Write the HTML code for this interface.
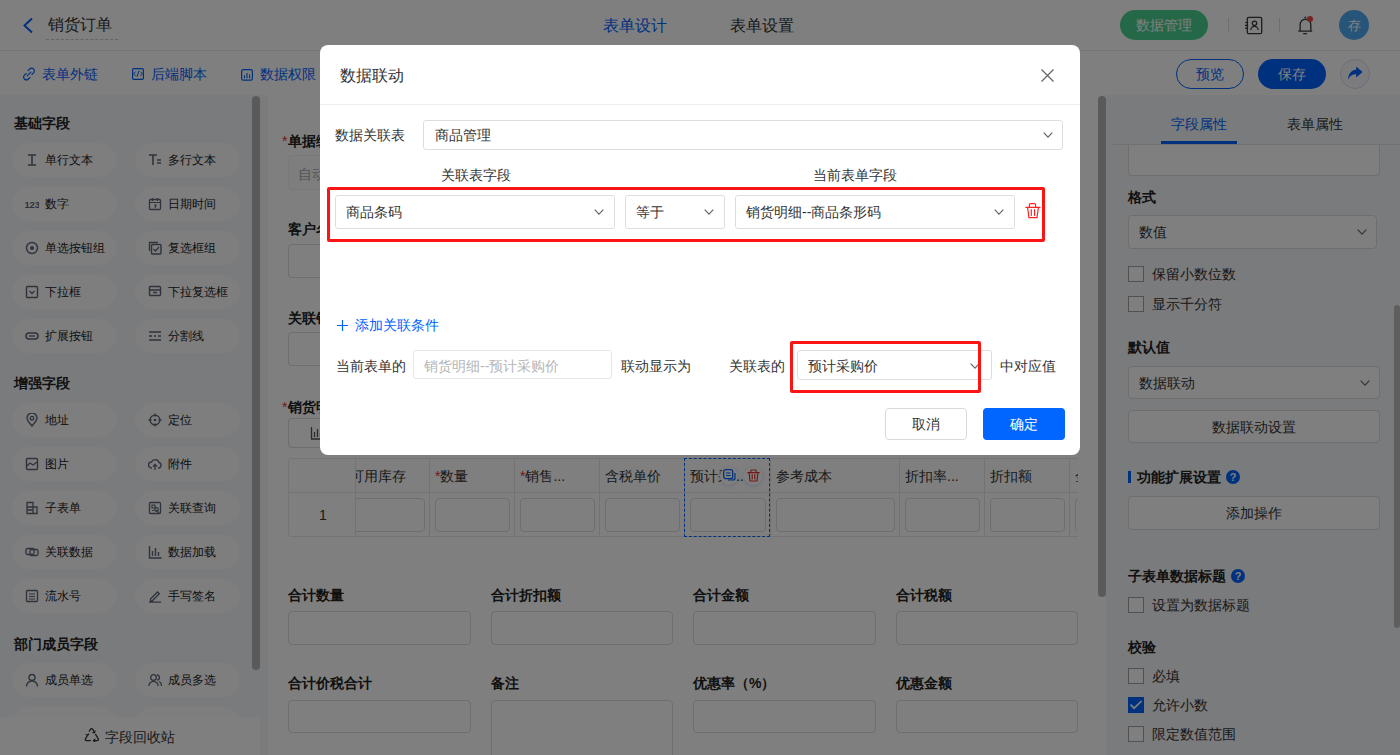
<!DOCTYPE html>
<html><head><meta charset="utf-8"><style>
*{box-sizing:border-box;margin:0;padding:0}
html,body{width:1400px;height:755px;overflow:hidden;background:#fff}
body{font-family:"Liberation Sans",sans-serif;color:#333;position:relative;font-size:14px}
.a{position:absolute;white-space:nowrap}
.t14{font-size:14px;line-height:14px}
.t12{font-size:12px;line-height:12px}
.t16{font-size:16px;line-height:16px}
svg{display:block}
#hdr{position:absolute;left:0;top:0;width:1400px;height:51px;background:#fff;border-bottom:1px solid #e8e8e8}
#bar2{position:absolute;left:0;top:51px;width:1400px;height:44px;background:#fff}
.blue{color:#0062ff}
#lp{position:absolute;left:0;top:95px;width:268px;height:660px;background:#f5f6f9}
.pill{position:absolute;width:105px;height:34px;border-radius:17px;background:#fcfcfd}
.pill .ic{position:absolute;left:12.5px;top:10px;width:14px;height:14px}
.pill span{position:absolute;left:33px;top:11px;font-size:12px;line-height:12px;color:#222}
.sech{position:absolute;left:14px;font-size:14px;line-height:14px;font-weight:bold;color:#222}
.sb{position:absolute;width:8px;border-radius:4px;background:#b5b5b5}
#cv{position:absolute;left:268px;top:95px;width:838px;height:660px;background:#fff}
.lab{position:absolute;font-size:14px;line-height:14px;font-weight:bold;color:#222;white-space:nowrap}
.inp{position:absolute;border:1px solid #dcdcdc;border-radius:4px;background:#fff}
#rp{position:absolute;left:1106px;top:95px;width:294px;height:660px;background:#f5f6f9}
.cb{position:absolute;width:16px;height:16px;border:1px solid #a3a3a3;background:#fff;border-radius:0}
.rt{position:absolute;font-size:14px;line-height:14px;color:#333;white-space:nowrap}
#ov{position:absolute;left:0;top:0;width:1400px;height:755px;background:rgba(0,0,0,.5)}
#md{position:absolute;left:320px;top:45px;width:760px;height:410px;background:#fff;border-radius:8px;overflow:hidden}
.sel{position:absolute;border:1px solid #dedede;border-radius:3px;background:#fff}
.red{position:absolute;border:3px solid #fb1414;border-radius:2px}
</style></head><body>

<div id="hdr">
  <svg class="a" style="left:22px;top:17px" width="12" height="17" viewBox="0 0 12 17"><path d="M10 1.5 L2.5 8.5 L10 15.5" fill="none" stroke="#0062ff" stroke-width="2"/></svg>
  <div class="a t16" style="left:48px;top:17px;color:#333">销货订单</div>
  <div class="a" style="left:46px;top:39px;width:72px;border-top:1px dashed #c8c8c8"></div>
  <div class="a t16 blue" style="left:603px;top:18px">表单设计</div>
  <div class="a t16" style="left:730px;top:18px;color:#333">表单设置</div>
  <div class="a" style="left:1120px;top:10px;width:88px;height:30px;border-radius:15px;background:#4ad090"></div>
  <div class="a t14" style="left:1136px;top:18px;color:#fff">数据管理</div>
  <div class="a" style="left:1228px;top:18px;width:1px;height:14px;background:#ddd"></div>
  <div class="a" style="left:1279px;top:18px;width:1px;height:14px;background:#ddd"></div>

  <svg class="a" style="left:1244px;top:16px" width="19" height="19" viewBox="0 0 19 19"><rect x="3.3" y="1.3" width="14.4" height="16.4" rx="1.5" stroke="#3a3a3a" stroke-width="1.3" fill="none"/><path d="M1 6.5h3.2M1 9.3h3.2M1 12.1h3.2" stroke="#3a3a3a" stroke-width="1.2"/><circle cx="10.5" cy="7.2" r="2.2" stroke="#3a3a3a" stroke-width="1.25" fill="none"/><path d="M6.8 14a3.7 3.7 0 0 1 7.4 0" stroke="#3a3a3a" stroke-width="1.25" fill="none"/></svg>
  <svg class="a" style="left:1297px;top:15px" width="17" height="20" viewBox="0 0 17 20"><path d="M1.3 16.1H15.2M3.1 15.6V9.6A5.35 5.35 0 0 1 13.8 9.6V15.6M7.4 2.3H9.3M6.2 18.6H10" stroke="#3a3a3a" stroke-width="1.3" fill="none"/></svg>
  <div class="a" style="left:1307px;top:16px;width:6px;height:6px;border-radius:50%;background:#f04646"></div>
  <div class="a" style="left:1339px;top:10px;width:30px;height:30px;border-radius:50%;background:#4eaaf5"></div>
  <div class="a" style="left:1348px;top:19px;font-size:13px;line-height:13px;color:#fff">存</div>
</div>
<div id="bar2">

  <svg class="a" style="left:22px;top:16px" width="14" height="14" viewBox="0 0 14 14"><path d="M6 3.6L7.6 2a2.7 2.7 0 0 1 3.9 3.9L9.9 7.5M8 10.4L6.4 12a2.7 2.7 0 0 1-3.9-3.9L4.1 6.5M5.2 8.8L8.8 5.2" stroke="#0062ff" stroke-width="1.15" fill="none" stroke-linecap="round"/></svg>
  <svg class="a" style="left:131px;top:16px" width="14" height="14" viewBox="0 0 14 14"><rect x="1.6" y="1.6" width="10.8" height="10.8" rx="1.2" stroke="#0062ff" stroke-width="1.2" fill="none"/><path d="M4.6 4.6L2.6 6.8l2 2M9.4 4.6l2 2.2-2 2M8 3.6L6 9.8" stroke="#0062ff" stroke-width="1" fill="none"/></svg>
  <svg class="a" style="left:240px;top:17px" width="14" height="13" viewBox="0 0 14 13"><rect x="1.6" y="1.6" width="10.8" height="10.6" rx="1.8" stroke="#0062ff" stroke-width="1.2" fill="none"/><path d="M4.5 7.2v3M7 5v5.2M9.6 6.6v3.6" stroke="#0062ff" stroke-width="1.1"/></svg>
  <div class="a t14 blue" style="left:42px;top:16px">表单外链</div>
  <div class="a t14 blue" style="left:151px;top:16px">后端脚本</div>
  <div class="a t14 blue" style="left:260px;top:16px">数据权限</div>
  <div class="a" style="left:1176px;top:8px;width:68px;height:30px;border-radius:15px;border:1px solid #0062ff"></div>
  <div class="a t14 blue" style="left:1196px;top:16px">预览</div>
  <div class="a" style="left:1258px;top:8px;width:68px;height:30px;border-radius:15px;background:#0062ff"></div>
  <div class="a t14" style="left:1278px;top:16px;color:#fff">保存</div>
  <div class="a" style="left:1340px;top:8px;width:30px;height:30px;border-radius:50%;border:1px solid #d5ddef;background:#f8f9fc"></div>
  <svg class="a" style="left:1347px;top:15px" width="17" height="15" viewBox="0 0 17 15"><path d="M9.2 0.5L15.6 6L9.2 11.5V8.3C5.5 8.3 3.2 9.6 1 13.6C1.4 8 4.2 4.4 9.2 3.6z" fill="#0062ff"/></svg>
</div>

<div id="lp">
<div class="sech" style="top:21px">基础字段</div>
<div class="pill" style="left:12px;top:48px"><svg class="ic" viewBox="0 0 14 14"><path d="M3 2h8M3 12h8M7 2v10" stroke="#5d6678" stroke-width="1.6" fill="none"/></svg><span>单行文本</span></div>
<div class="pill" style="left:135px;top:48px"><svg class="ic" viewBox="0 0 14 14"><path d="M1 2h8M5 2v10M9 7h4M9 10h4" stroke="#5d6678" stroke-width="1.6" fill="none"/></svg><span>多行文本</span></div>
<div class="pill" style="left:12px;top:92px"><svg class="ic" viewBox="0 0 14 14"><text x="-0.5" y="10.5" font-size="9.5" font-weight="700" letter-spacing="-0.2" fill="#5d6678" font-family="Liberation Sans">123</text></svg><span>数字</span></div>
<div class="pill" style="left:135px;top:92px"><svg class="ic" viewBox="0 0 14 14"><rect x="1.5" y="2.5" width="11" height="10" rx="1" stroke="#5d6678" stroke-width="1.3" fill="none"/><path d="M1.5 5.5h11M4.5 1v3M9.5 1v3M6 8h2l-1 3" stroke="#5d6678" stroke-width="1.2" fill="none"/></svg><span>日期时间</span></div>
<div class="pill" style="left:12px;top:136px"><svg class="ic" viewBox="0 0 14 14"><circle cx="7" cy="7" r="5.5" stroke="#5d6678" stroke-width="1.4" fill="none"/><circle cx="7" cy="7" r="2" fill="#5d6678"/></svg><span>单选按钮组</span></div>
<div class="pill" style="left:135px;top:136px"><svg class="ic" viewBox="0 0 14 14"><path d="M1.5 10V1.5H10" stroke="#5d6678" stroke-width="1.3" fill="none"/><rect x="3.5" y="3.5" width="9.5" height="9.5" rx="1" stroke="#5d6678" stroke-width="1.4" fill="none"/><path d="M5.5 8l2 2 3.5-4" stroke="#5d6678" stroke-width="1.3" fill="none"/></svg><span>复选框组</span></div>
<div class="pill" style="left:12px;top:180px"><svg class="ic" viewBox="0 0 14 14"><rect x="1.5" y="1.5" width="11" height="11" rx="1" stroke="#5d6678" stroke-width="1.4" fill="none"/><path d="M4.5 6l2.5 2.5L9.5 6" stroke="#5d6678" stroke-width="1.3" fill="none"/></svg><span>下拉框</span></div>
<div class="pill" style="left:135px;top:180px"><svg class="ic" viewBox="0 0 14 14"><rect x="1.5" y="1.5" width="11" height="9" rx="1" stroke="#5d6678" stroke-width="1.4" fill="none"/><path d="M1.5 5h11M5 7.5h4" stroke="#5d6678" stroke-width="1.3" fill="none"/></svg><span>下拉复选框</span></div>
<div class="pill" style="left:12px;top:224px"><svg class="ic" viewBox="0 0 14 14"><rect x="1" y="4" width="12" height="6" rx="3" stroke="#5d6678" stroke-width="1.5" fill="none"/><path d="M4 7h6" stroke="#5d6678" stroke-width="1.3"/></svg><span>扩展按钮</span></div>
<div class="pill" style="left:135px;top:224px"><svg class="ic" viewBox="0 0 14 14"><path d="M1 3h12M1 7h3M6 7h2M10 7h3M1 11h12" stroke="#5d6678" stroke-width="1.3" fill="none"/></svg><span>分割线</span></div>
<div class="sech" style="top:281px">增强字段</div>
<div class="pill" style="left:12px;top:308px"><svg class="ic" viewBox="0 0 14 14"><path d="M7 13C3.5 9 2 7 2 5a5 5 0 0 1 10 0c0 2-1.5 4-5 8z" stroke="#5d6678" stroke-width="1.4" fill="none"/><circle cx="7" cy="5.2" r="1.8" stroke="#5d6678" stroke-width="1.3" fill="none"/></svg><span>地址</span></div>
<div class="pill" style="left:135px;top:308px"><svg class="ic" viewBox="0 0 14 14"><circle cx="7" cy="7" r="4.8" stroke="#5d6678" stroke-width="1.4" fill="none"/><circle cx="7" cy="7" r="1.3" fill="#5d6678"/><path d="M7 0.5v3M7 10.5v3M0.5 7h3M10.5 7h3" stroke="#5d6678" stroke-width="1.4"/></svg><span>定位</span></div>
<div class="pill" style="left:12px;top:352px"><svg class="ic" viewBox="0 0 14 14"><rect x="1.5" y="1.5" width="11" height="11" rx="1.2" stroke="#5d6678" stroke-width="1.4" fill="none"/><path d="M2 9l3-3 3 2 4-3" stroke="#5d6678" stroke-width="1.3" fill="none"/></svg><span>图片</span></div>
<div class="pill" style="left:135px;top:352px"><svg class="ic" viewBox="0 0 14 14"><path d="M4 11H3.5a3 3 0 0 1 0-6 4 4 0 0 1 7.5 0.5A2.8 2.8 0 0 1 10.5 11H10" stroke="#5d6678" stroke-width="1.4" fill="none"/><path d="M7 13V7.5M5 9.5l2-2 2 2" stroke="#5d6678" stroke-width="1.3" fill="none"/></svg><span>附件</span></div>
<div class="pill" style="left:12px;top:396px"><svg class="ic" viewBox="0 0 14 14"><path d="M2 1.5h6v11H2zM8 6h4v6.5H8M2 6h6M2 9h6" stroke="#5d6678" stroke-width="1.3" fill="none"/></svg><span>子表单</span></div>
<div class="pill" style="left:135px;top:396px"><svg class="ic" viewBox="0 0 14 14"><rect x="1.5" y="1.5" width="11" height="11" rx="1" stroke="#5d6678" stroke-width="1.3" fill="none"/><path d="M4 4h3v3H4zM8 9l3 3M4 9.5h2" stroke="#5d6678" stroke-width="1.2" fill="none"/><circle cx="8.5" cy="8.5" r="1.8" stroke="#5d6678" stroke-width="1.2" fill="none"/></svg><span>关联查询</span></div>
<div class="pill" style="left:12px;top:440px"><svg class="ic" viewBox="0 0 14 14"><rect x="1" y="3.5" width="8" height="6" rx="1.5" stroke="#5d6678" stroke-width="1.3" fill="none"/><rect x="5" y="4.5" width="8" height="6" rx="1.5" stroke="#5d6678" stroke-width="1.3" fill="none"/></svg><span>关联数据</span></div>
<div class="pill" style="left:135px;top:440px"><svg class="ic" viewBox="0 0 14 14"><path d="M1.5 1v12h12M4.5 6v5M7.5 3v8M10.5 7v4" stroke="#5d6678" stroke-width="1.4" fill="none"/></svg><span>数据加载</span></div>
<div class="pill" style="left:12px;top:484px"><svg class="ic" viewBox="0 0 14 14"><rect x="1.5" y="1.5" width="11" height="11" rx="1" stroke="#5d6678" stroke-width="1.3" fill="none"/><path d="M4 5h6M4 7.5h3M7 7.5h3M4 10h6" stroke="#5d6678" stroke-width="1.2" fill="none"/></svg><span>流水号</span></div>
<div class="pill" style="left:135px;top:484px"><svg class="ic" viewBox="0 0 14 14"><path d="M2.5 10l7-7 1.8 1.8-7 7H2.5zM1 13.2h12" stroke="#5d6678" stroke-width="1.3" fill="none"/></svg><span>手写签名</span></div>
<div class="sech" style="top:542px">部门成员字段</div>
<div class="pill" style="left:12px;top:568px"><svg class="ic" viewBox="0 0 14 14"><circle cx="7" cy="4.5" r="3" stroke="#5d6678" stroke-width="1.4" fill="none"/><path d="M1.5 13.5a5.5 5.5 0 0 1 11 0" stroke="#5d6678" stroke-width="1.4" fill="none"/></svg><span>成员单选</span></div>
<div class="pill" style="left:135px;top:568px"><svg class="ic" viewBox="0 0 14 14"><circle cx="5.5" cy="4.5" r="2.8" stroke="#5d6678" stroke-width="1.3" fill="none"/><path d="M0.8 13a4.7 4.7 0 0 1 9.4 0M9 2a2.5 2.5 0 0 1 0 5M11 8.5a4.5 4.5 0 0 1 2.5 4.5" stroke="#5d6678" stroke-width="1.3" fill="none"/></svg><span>成员多选</span></div>
<div class="pill" style="left:12px;top:612px"><svg class="ic" viewBox="0 0 14 14"></svg><span>部门单选</span></div>
<div class="pill" style="left:135px;top:612px"><svg class="ic" viewBox="0 0 14 14"></svg><span>部门多选</span></div>
<div class="sb" style="left:252px;top:1px;height:574px"></div>
<div style="position:absolute;left:0;top:622px;width:260px;height:38px;background:#fff"><svg style="position:absolute;left:84px;top:11px" width="16" height="14" viewBox="0 0 16 14"><path d="M5.3 3.2L6.6 1.2Q7.6 -0.1 8.6 1.2L10.4 4.3M11.6 6.4L14.2 10.9Q14.9 12.6 13 12.6H9.6M6.4 12.6H2.6Q0.7 12.6 1.5 10.9L3.6 7.2" stroke="#333" stroke-width="1.25" fill="none" stroke-linecap="round"/><path d="M8.8 4.6L10.6 4.6L11 2.8M11 11.1L9.4 12.6L11 14M2.2 6.6L3.7 7.3L4.8 5.9" stroke="#333" stroke-width="1.15" fill="none" stroke-linecap="round"/></svg><div class="a t14" style="left:105px;top:12.5px;color:#333">字段回收站</div></div>
</div>
<div id="cv"><div class="lab" style="left:14px;top:39px"><span style="color:#e5322d;font-weight:normal;margin-right:1px">*</span>单据编号</div>
<div class="inp" style="left:20px;top:60px;width:385px;height:35px;border-color:#f3f3f3;background:#fcfcfc"></div>
<div class="a t14" style="left:30px;top:72px;color:#a8a8a8">自动生成</div>
<div class="lab" style="left:20px;top:127px">客户名称</div>
<div class="inp" style="left:20px;top:149px;width:385px;height:34px"></div>
<div class="lab" style="left:20px;top:216px">关联销售机会</div>
<div class="inp" style="left:20px;top:237px;width:385px;height:34px"></div>
<div class="lab" style="left:14px;top:305px"><span style="color:#e5322d;font-weight:normal;margin-right:1px">*</span>销货明细</div>
<div class="inp" style="left:20px;top:323px;width:112px;height:30px"></div>
<svg class="a" style="left:42px;top:331px" width="14" height="14" viewBox="0 0 14 14"><path d="M1.5 1v12h12M4.5 6v5M7.5 3v8M10.5 7v4" stroke="#555" stroke-width="1.3" fill="none"/></svg>
<div style="position:absolute;left:20px;top:363px;width:790px;height:79px;border:1px solid #e8e8e8;border-right:none;border-radius:4px 0 0 4px;overflow:hidden;background:#fff">
<div class="a" style="left:0;top:33px;width:790px;height:1px;background:#e6e6e6"></div>
<div class="a" style="left:140px;top:0;width:1px;height:79px;background:#e6e6e6"></div>
<div class="a t14" style="left:61px;top:10px;color:#333">可用库存</div>
<div class="inp" style="left:61px;top:39px;width:75px;height:34px"></div>
<div class="a" style="left:225px;top:0;width:1px;height:79px;background:#e6e6e6"></div>
<div class="a t14" style="left:146px;top:10px;color:#333"><span style="color:#e5322d">*</span>数量</div>
<div class="inp" style="left:146px;top:39px;width:75px;height:34px"></div>
<div class="a" style="left:310px;top:0;width:1px;height:79px;background:#e6e6e6"></div>
<div class="a t14" style="left:231px;top:10px;color:#333"><span style="color:#e5322d">*</span>销售...</div>
<div class="inp" style="left:231px;top:39px;width:75px;height:34px"></div>
<div class="a" style="left:395px;top:0;width:1px;height:79px;background:#e6e6e6"></div>
<div class="a t14" style="left:316px;top:10px;color:#333">含税单价</div>
<div class="inp" style="left:316px;top:39px;width:75px;height:34px"></div>
<div class="a" style="left:481px;top:0;width:1px;height:79px;background:#e6e6e6"></div>
<div class="a t14" style="left:401px;top:10px;color:#333">预计采...</div>
<div class="inp" style="left:401px;top:39px;width:76px;height:34px"></div>
<div class="a" style="left:610px;top:0;width:1px;height:79px;background:#e6e6e6"></div>
<div class="a t14" style="left:487px;top:10px;color:#333">参考成本</div>
<div class="inp" style="left:487px;top:39px;width:119px;height:34px"></div>
<div class="a" style="left:695px;top:0;width:1px;height:79px;background:#e6e6e6"></div>
<div class="a t14" style="left:616px;top:10px;color:#333">折扣率...</div>
<div class="inp" style="left:616px;top:39px;width:75px;height:34px"></div>
<div class="a" style="left:780px;top:0;width:1px;height:79px;background:#e6e6e6"></div>
<div class="a t14" style="left:701px;top:10px;color:#333">折扣额</div>
<div class="inp" style="left:701px;top:39px;width:75px;height:34px"></div>
<div class="a" style="left:865px;top:0;width:1px;height:79px;background:#e6e6e6"></div>
<div class="a t14" style="left:786px;top:10px;color:#333">金额</div>
<div class="inp" style="left:786px;top:39px;width:75px;height:34px"></div>
<div class="a" style="left:0;top:0;width:67px;height:79px;background:#fff;border-right:1px solid #e6e6e6"></div>
<div class="a" style="left:0;top:33px;width:67px;height:1px;background:#e6e6e6"></div>
<div class="a t14" style="left:30px;top:49px;color:#333">1</div>
</div>
<div class="a" style="left:416px;top:363px;width:86px;height:79px;border:1px dashed #0062ff"></div>
<div class="a" style="left:452px;top:372px;width:18px;height:18px;border-radius:50%;background:#fff;box-shadow:0 1px 4px rgba(0,50,160,.18)"></div>
<div class="a" style="left:476px;top:372px;width:18px;height:18px;border-radius:50%;background:#fff;box-shadow:0 1px 4px rgba(0,50,160,.18)"></div>
<svg class="a" style="left:455px;top:374px" width="13" height="12" viewBox="0 0 13 12"><rect x="0.7" y="0.7" width="9" height="9" rx="2" stroke="#0062ff" stroke-width="1.3" fill="none"/><path d="M3 4h4.5M3 6.5h4.5M12 4v5a2 2 0 0 1-2 2H5" stroke="#0062ff" stroke-width="1.2" fill="none"/></svg>
<svg class="a" style="left:479px;top:374px" width="13" height="13" viewBox="0 0 13 13"><path d="M3.8 3.4V1.8Q3.8 1 4.6 1H8.4Q9.2 1 9.2 1.8V3.4M0.8 3.6H12.2M2.1 3.6L3 12H10L10.9 3.6M5.2 5.6V10M7.8 5.6V10" stroke="#e5322d" stroke-width="1.2" fill="none" stroke-linecap="round"/></svg>
<div class="lab" style="left:20px;top:493px">合计数量</div>
<div class="inp" style="left:20px;top:516px;width:183px;height:34px"></div>
<div class="lab" style="left:223px;top:493px">合计折扣额</div>
<div class="inp" style="left:223px;top:516px;width:182px;height:34px"></div>
<div class="lab" style="left:425px;top:493px">合计金额</div>
<div class="inp" style="left:425px;top:516px;width:183px;height:34px"></div>
<div class="lab" style="left:628px;top:493px">合计税额</div>
<div class="inp" style="left:628px;top:516px;width:182px;height:34px"></div>
<div class="lab" style="left:20px;top:581px">合计价税合计</div>
<div class="inp" style="left:20px;top:605px;width:183px;height:33px"></div>
<div class="lab" style="left:223px;top:581px">备注</div>
<div class="inp" style="left:223px;top:605px;width:182px;height:80px"></div>
<div class="lab" style="left:425px;top:581px">优惠率（%）</div>
<div class="inp" style="left:425px;top:605px;width:183px;height:33px"></div>
<div class="lab" style="left:628px;top:581px">优惠金额</div>
<div class="inp" style="left:628px;top:605px;width:182px;height:33px"></div>
<div class="sb" style="left:830px;top:1px;height:501px"></div></div>
<div id="rp"><div class="inp" style="left:22px;top:25px;width:252px;height:56px;"></div>
<div class="a" style="left:0;top:0;width:294px;height:49px;background:#f5f6f9"></div>
<div class="a" style="left:7px;top:49px;width:287px;height:1px;background:#e3e3e3"></div>
<div class="rt" style="left:65px;top:22px;color:#0062ff">字段属性</div>
<div class="rt" style="left:181px;top:22px;">表单属性</div>
<div class="a" style="left:55px;top:46px;width:76px;height:3px;background:#0062ff"></div>
<div class="rt" style="left:22px;top:95px;font-weight:bold;color:#222">格式</div>
<div class="inp" style="left:22px;top:120px;width:249px;height:34px;"></div>
<div class="rt" style="left:33px;top:130px;">数值</div>
<svg class="a" style="left:251px;top:134px" width="10" height="6" viewBox="0 0 10 6"><path d="M0.7 0.7L5.0 5.1L9.3 0.7" stroke="#666" stroke-width="1.2" fill="none"/></svg>
<div class="cb" style="left:22px;top:171px"></div>
<div class="rt" style="left:46px;top:172px;">保留小数位数</div>
<div class="cb" style="left:22px;top:201px"></div>
<div class="rt" style="left:46px;top:202px;">显示千分符</div>
<div class="rt" style="left:22px;top:245px;font-weight:bold;color:#222">默认值</div>
<div class="inp" style="left:22px;top:271px;width:252px;height:33px;"></div>
<div class="rt" style="left:33px;top:281px;">数据联动</div>
<svg class="a" style="left:254px;top:285px" width="10" height="6" viewBox="0 0 10 6"><path d="M0.7 0.7L5.0 5.1L9.3 0.7" stroke="#666" stroke-width="1.2" fill="none"/></svg>
<div class="inp" style="left:22px;top:315px;width:252px;height:33px;"></div>
<div class="rt" style="left:106px;top:325px;">数据联动设置</div>
<div class="a" style="left:22px;top:376px;width:3px;height:12px;background:#0062ff"></div>
<div class="rt" style="left:31px;top:375px;font-weight:bold;color:#222">功能扩展设置</div>
<div class="a" style="left:120px;top:375px;width:14px;height:14px;border-radius:50%;background:#0062ff"></div><div class="a" style="left:120px;top:376px;width:14px;text-align:center;font-size:11px;line-height:12px;font-weight:bold;color:#fff">?</div>
<div class="inp" style="left:22px;top:401px;width:252px;height:34px;"></div>
<div class="rt" style="left:120px;top:411px;">添加操作</div>
<div class="rt" style="left:22px;top:474px;font-weight:bold;color:#222">子表单数据标题</div>
<div class="a" style="left:125px;top:474px;width:14px;height:14px;border-radius:50%;background:#0062ff"></div><div class="a" style="left:125px;top:475px;width:14px;text-align:center;font-size:11px;line-height:12px;font-weight:bold;color:#fff">?</div>
<div class="cb" style="left:22px;top:502px"></div>
<div class="rt" style="left:46px;top:503px;">设置为数据标题</div>
<div class="rt" style="left:22px;top:545px;font-weight:bold;color:#222">校验</div>
<div class="cb" style="left:22px;top:573px"></div>
<div class="rt" style="left:46px;top:574px;">必填</div>
<div class="cb" style="left:22px;top:602px;background:#0062ff;border-color:#0062ff"></div><svg class="a" style="left:22px;top:602px" width="16" height="16" viewBox="0 0 16 16"><path d="M2.6 7.6L6.1 11.2L13.6 4" stroke="#fff" stroke-width="1.7" fill="none"/></svg>
<div class="rt" style="left:46px;top:603px;">允许小数</div>
<div class="cb" style="left:22px;top:631px"></div>
<div class="rt" style="left:46px;top:632px;">限定数值范围</div>
<div class="a" style="left:288px;top:210px;width:6px;height:323px;border-radius:3px;background:#bdbdbd"></div></div>
<div id="ov"></div>
<div id="md"><div class="a t16" style="left:20px;top:23px;color:#333">数据联动</div>
<svg class="a" style="left:721px;top:24px" width="13" height="13" viewBox="0 0 13 13"><path d="M0.5 0.5L12.5 12.5M12.5 0.5L0.5 12.5" stroke="#666" stroke-width="1.3" fill="none"/></svg>
<div class="a" style="left:0;top:59px;width:760px;height:1px;background:#eee"></div>
<div class="a t14" style="left:15px;top:83px;color:#333;">数据关联表</div>
<div class="sel" style="left:103px;top:75px;width:640px;height:30px;"></div>
<div class="a t14" style="left:115px;top:83px;color:#333;">商品管理</div>
<svg class="a" style="left:723px;top:87px" width="10" height="6" viewBox="0 0 10 6"><path d="M0.7 0.7L5.0 5.1L9.3 0.7" stroke="#666" stroke-width="1.2" fill="none"/></svg>
<div class="a t14" style="left:121px;top:123px;color:#333;">关联表字段</div>
<div class="a t14" style="left:493px;top:123px;color:#333;">当前表单字段</div>
<div class="sel" style="left:15px;top:150px;width:280px;height:34px;"></div>
<div class="a t14" style="left:26px;top:160px;color:#333;">商品条码</div>
<svg class="a" style="left:274px;top:164px" width="10" height="6" viewBox="0 0 10 6"><path d="M0.7 0.7L5.0 5.1L9.3 0.7" stroke="#666" stroke-width="1.2" fill="none"/></svg>
<div class="sel" style="left:305px;top:150px;width:100px;height:34px;"></div>
<div class="a t14" style="left:316px;top:160px;color:#333;">等于</div>
<svg class="a" style="left:384px;top:164px" width="10" height="6" viewBox="0 0 10 6"><path d="M0.7 0.7L5.0 5.1L9.3 0.7" stroke="#666" stroke-width="1.2" fill="none"/></svg>
<div class="sel" style="left:415px;top:150px;width:280px;height:34px;"></div>
<div class="a t14" style="left:426px;top:160px;color:#333;">销货明细--商品条形码</div>
<svg class="a" style="left:674px;top:164px" width="10" height="6" viewBox="0 0 10 6"><path d="M0.7 0.7L5.0 5.1L9.3 0.7" stroke="#666" stroke-width="1.2" fill="none"/></svg>
<svg class="a" style="left:705px;top:157px" width="16" height="17" viewBox="0 0 16 17"><path d="M4.4 5.2V2.6Q4.4 1.6 5.4 1.6H9.6Q10.6 1.6 10.6 2.6V5.2M0.9 5.4H15M2.6 5.4L3.9 15.6H12L13.4 5.4M6.3 7.6V13.4M9.6 7.6V13.4" stroke="#ff2020" stroke-width="1.15" fill="none" stroke-linecap="round"/></svg>
<div class="red" style="left:7px;top:142px;width:718px;height:55px"></div>
<svg class="a" style="left:17px;top:275px" width="11" height="11" viewBox="0 0 11 11"><path d="M5.5 0v11M0 5.5h11" stroke="#0062ff" stroke-width="1.2"/></svg>
<div class="a t14" style="left:35px;top:273px;color:#333;color:#0062ff">添加关联条件</div>
<div class="a t14" style="left:16px;top:314px;color:#333;">当前表单的</div>
<div class="sel" style="left:93px;top:305px;width:199px;height:29px;border-color:#e6e6e6"></div>
<div class="a t14" style="left:104px;top:314px;color:#333;color:#b5b5b5">销货明细--预计采购价</div>
<div class="a t14" style="left:301px;top:314px;color:#333;">联动显示为</div>
<div class="a t14" style="left:409px;top:314px;color:#333;">关联表的</div>
<div class="sel" style="left:477px;top:305px;width:195px;height:30px;"></div>
<div class="a t14" style="left:488px;top:314px;color:#333;">预计采购价</div>
<svg class="a" style="left:650px;top:318px" width="10" height="6" viewBox="0 0 10 6"><path d="M0.7 0.7L5.0 5.1L9.3 0.7" stroke="#666" stroke-width="1.2" fill="none"/></svg>
<div class="red" style="left:470px;top:296px;width:191px;height:52px"></div>
<div class="a t14" style="left:680px;top:314px;color:#333;">中对应值</div>
<div class="a" style="left:565px;top:363px;width:82px;height:32px;border:1px solid #d9d9d9;border-radius:4px;background:#fff"></div>
<div class="a t14" style="left:592px;top:372px;color:#333;">取消</div>
<div class="a" style="left:663px;top:363px;width:82px;height:32px;border-radius:4px;background:#0066ff"></div>
<div class="a t14" style="left:690px;top:372px;color:#333;color:#fff">确定</div></div>
</body></html>
